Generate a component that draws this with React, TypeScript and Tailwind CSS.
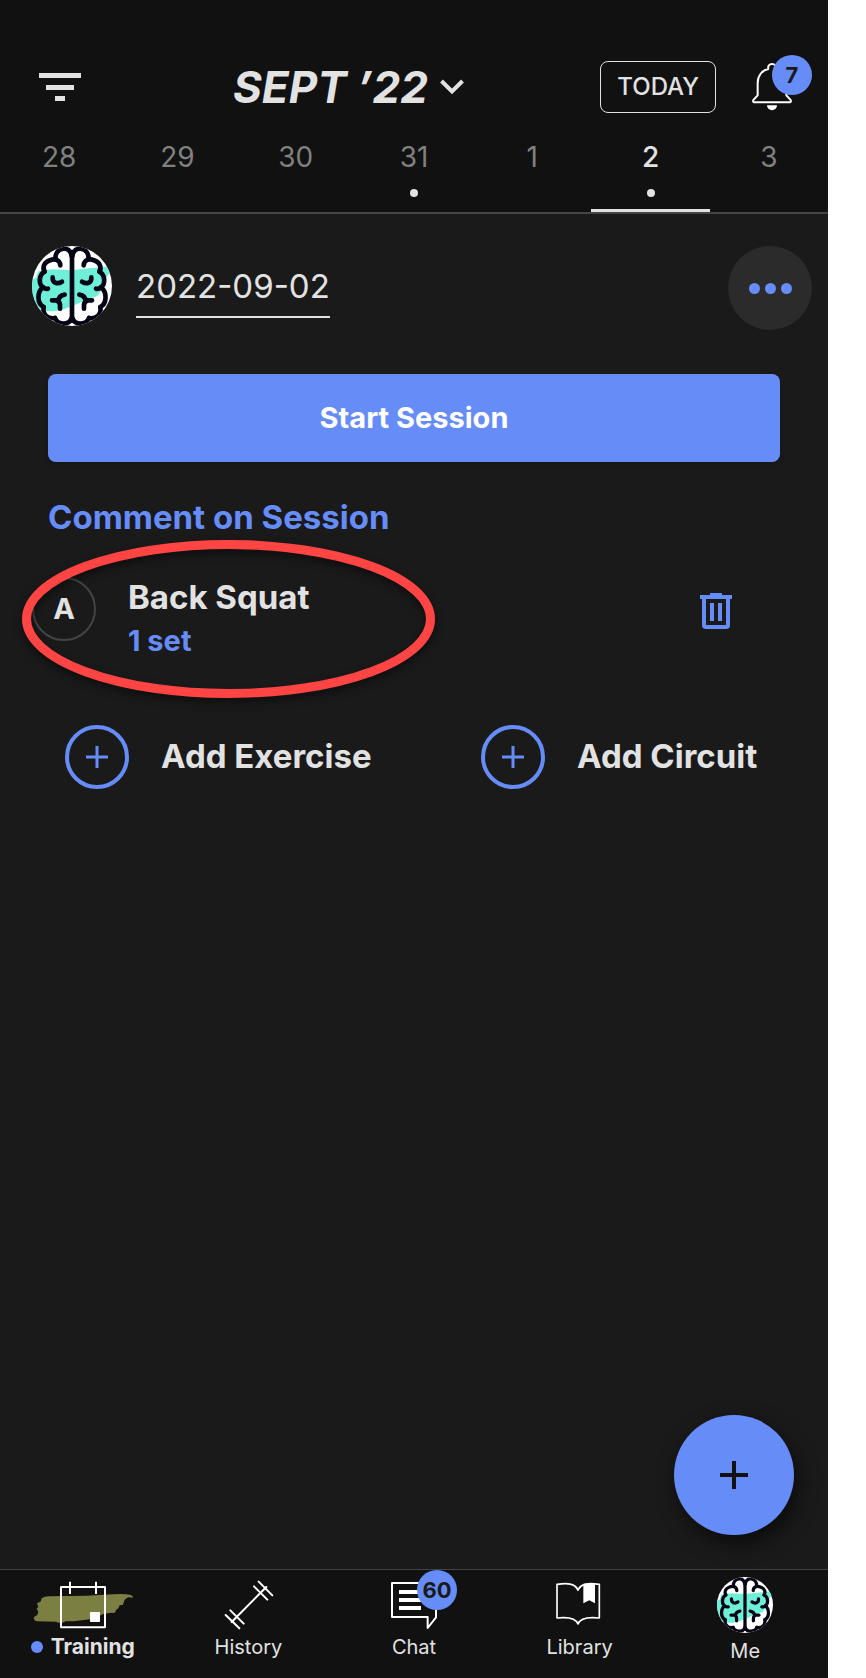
import { useState, type ReactNode } from "react";

const DAYS = [
  { day: 28 },
  { day: 29 },
  { day: 30 },
  { day: 31, dot: true },
  { day: 1 },
  { day: 2, dot: true },
  { day: 3 },
];

export default function App() {
  const [selected, setSelected] = useState(2);

  return (
    <div className="min-h-screen bg-white pr-[38px] font-['Inter',sans-serif] text-[#e2e2e2]">
      <div className="flex min-h-screen flex-col bg-[#1a1a1a]">
        <header className="border-b-2 border-[#444] bg-[#111] pt-[61px]">
          <div className="flex h-13 items-center pr-9 pl-[39px]">
            <button aria-label="Filter">
              <svg width="42" height="28" viewBox="0 0 42 28" fill="currentColor" className="block">
                <path d="M0 0h42v5H0zM7 12h28v5H7zM16 23h10v5H16z" />
              </svg>
            </button>
            <div className="ml-[152px] flex-1">
              <button className="flex items-center gap-3 text-[44px] leading-13 font-bold whitespace-nowrap italic">
                <h1>SEPT ’22</h1>
                <svg width="24" height="16" viewBox="0 0 24 16" fill="none" stroke="currentColor" strokeWidth="4">
                  <path d="M1.5 2 12 12.5 22.5 2" />
                </svg>
              </button>
            </div>
            <button className="h-13 rounded-lg border border-[#e2e2e2] px-4 text-2xl font-medium">TODAY</button>
            <button aria-label="Notifications" className="relative ml-9">
              <svg width="40" height="48" viewBox="0 0 120 144" fill="none" className="block">
                <path d="M6 118Q1 116 5 110L17 97V60C17 38 30 22 49 18C47 8 52 3 60 3S73 8 71 18C90 22 103 38 103 60V97L115 110Q119 116 114 118Z" stroke="#fff" strokeWidth="6" strokeLinejoin="round" />
                <path d="M45 127h30a15 15 0 0 1-30 0z" fill="#fff" />
              </svg>
              <Badge className="-top-2 left-5">7</Badge>
            </button>
          </div>
          <div className="mt-6 grid grid-cols-7">
            {DAYS.map((d) => (
              <button
                key={d.day}
                onClick={() => setSelected(d.day)}
                className={`flex h-[75px] flex-col items-center border-b-[3px] text-[28px] leading-10 ${d.day === selected ? "border-[#e2e2e2] font-medium" : "border-transparent text-[#808080]"}`}
              >
                {d.day}
                {d.dot && <span className="mt-3 h-2 w-2 rounded-full bg-[#e2e2e2]" />}
              </button>
            ))}
          </div>
        </header>

        <main className="relative flex-1 pt-8">
          <div className="flex items-start pr-4 pl-8">
            <Brain className="h-20 w-20" />
            <button className="mt-5 ml-6 border-b-2 border-[#e2e2e2] pb-[10px] text-[33px] leading-10">2022-09-02</button>
            <button aria-label="More" className="ml-auto flex h-21 w-21 items-center justify-center gap-[5px] rounded-full bg-[#2b2b2b]">
              <span className="h-[11px] w-[11px] rounded-full bg-[#668cf8]" />
              <span className="h-[11px] w-[11px] rounded-full bg-[#668cf8]" />
              <span className="h-[11px] w-[11px] rounded-full bg-[#668cf8]" />
            </button>
          </div>

          <div className="px-12 pt-11">
            <button className="h-22 w-full rounded-lg bg-[#668cf8] text-[29px] font-bold text-white shadow-md">Start Session</button>
            <button className="mt-8 block text-[33px] leading-[46px] font-bold text-[#668cf8]">Comment on Session</button>
          </div>

          <div className="relative mt-[35px] flex items-start pr-24 pl-8">
            <span className="mt-0.5 flex h-16 w-16 items-center justify-center rounded-full border-2 border-[#444] text-[29px] font-bold">A</span>
            <div className="ml-8 font-bold">
              <h2 className="text-[33px] leading-11">Back Squat</h2>
              <p className="text-[29px] leading-11 text-[#668cf8]">1 set</p>
            </div>
            <button aria-label="Delete exercise" className="mt-[18px] ml-auto text-[#668cf8]">
              <svg width="32" height="36" viewBox="0 0 32 36" fill="none" className="block">
                <path d="M0 2h10V0h12v2h10v4H0zM10 10h4v18h-4zM18 10h4v18h-4z" fill="currentColor" />
                <path d="M4 5v27q0 2 2 2h20q2 0 2-2V5" stroke="currentColor" strokeWidth="4" />
              </svg>
            </button>
            <svg width="460" height="190" viewBox="0 0 460 190" fill="none" className="pointer-events-none absolute -top-[50px] left-0 drop-shadow-[0_4px_4px_rgba(0,0,0,0.5)]">
              <ellipse cx="228.5" cy="94" rx="202" ry="74.5" stroke="#ff4444" strokeWidth="9" />
            </svg>
          </div>

          <div className="mt-[62px] grid grid-cols-2 gap-1">
            <AddButton label="Add Exercise" />
            <AddButton label="Add Circuit" />
          </div>

          <button aria-label="Add" className="absolute right-[34px] bottom-[34px] flex h-30 w-30 items-center justify-center rounded-full bg-[#668cf8] shadow-[4px_8px_20px_rgba(0,0,0,0.6)]">
            <svg width="28" height="28" viewBox="0 0 28 28" stroke="#111" strokeWidth="4">
              <path d="M14 0v28M0 14h28" />
            </svg>
          </button>
        </main>

        <nav className="grid grid-cols-5 border-t border-[#444] bg-[#111] pt-[7px] pb-[13px] text-xl leading-7">
          <NavItem
            label={
              <span className="flex items-center gap-2 text-[21px] font-bold">
                <span className="h-3 w-3 rounded-full bg-[#668cf8]" />
                Training
              </span>
            }
          >
            <svg width="100" height="56" viewBox="0 0 300 168" fill="none">
              <path d="M2 124Q4 117 13 114L16 104 11 96 16 89 12 80Q14 76 22 75L26 64Q36 57 51 58L161 56 241 52Q275 50 294 54L299 58V62L287 61Q274 65 272 77L269 84 260 85 256 94 249 99 246 107 230 108 211 111Q190 122 171 127L121 133 96 133 94 136 74 137 70 134 11 133Q3 131 2 124Z" fill="#7b7f42" />
              <rect x="84" y="30" width="132" height="121" rx="1" stroke="#fff" strokeWidth="6" />
              <path d="M111 14v37M189 14v37" stroke="#fff" strokeWidth="6" />
              <rect x="171" y="105" width="30" height="30" rx="2" fill="#fff" />
            </svg>
          </NavItem>
          <NavItem label="History">
            <svg width="56" height="56" viewBox="0 0 168 168" fill="none" stroke="#fff" strokeWidth="6" strokeLinecap="round">
              <path d="M35 135 139 30M116 14l41 41M102 28l40 40M31 100l40 40M17 114l41 40" />
            </svg>
          </NavItem>
          <NavItem label="Chat">
            <svg width="56" height="56" viewBox="0 0 168 168" fill="none">
              <path d="M18 18H150V121L125 153V120H18Z" stroke="#fff" strokeWidth="6" strokeLinejoin="round" />
              <path d="M39 45h66M39 69h66M39 93h66" stroke="#fff" strokeWidth="12" />
            </svg>
            <Badge className="-top-[7px] left-[31px]">60</Badge>
          </NavItem>
          <NavItem label="Library">
            <svg width="56" height="56" viewBox="0 0 168 168" fill="none">
              <path d="M15 22C45 18 70 18 78 40C86 18 111 18 142 22V123C115 120 85 122 78 141C71 122 42 120 15 123Z" stroke="#fff" strokeWidth="5" strokeLinejoin="round" />
              <path d="M94 20h35v59l-17-9-18 9z" fill="#fff" />
            </svg>
          </NavItem>
          <NavItem label={<span className="mt-1 block">Me</span>}>
            <Brain className="h-14 w-14" />
          </NavItem>
        </nav>
      </div>
    </div>
  );
}

function Badge({ className, children }: { className: string; children: ReactNode }) {
  return (
    <span className={`absolute flex h-10 w-10 items-center justify-center rounded-full bg-[#668cf8] text-[22px] font-bold text-[#1a1a1a] ${className}`}>
      {children}
    </span>
  );
}

function AddButton({ label }: { label: string }) {
  return (
    <button className="flex items-center gap-8 pl-[65px] text-[33px] font-bold whitespace-nowrap">
      <span className="flex h-16 w-16 shrink-0 items-center justify-center rounded-full border-4 border-[#668cf8]">
        <svg width="22" height="22" viewBox="0 0 22 22" stroke="#668cf8" strokeWidth="3">
          <path d="M11 0v22M0 11h22" />
        </svg>
      </span>
      {label}
    </button>
  );
}

function NavItem({ label, children }: { label: ReactNode; children: ReactNode }) {
  return (
    <a href="#" className="flex flex-col items-center">
      <span className="relative block h-14">{children}</span>
      {label}
    </a>
  );
}

function Brain({ className }: { className: string }) {
  const half = (
    <>
      <path d="M119 30C116 12 104 7 94 8C78 10 68 24 71 40" />
      <path d="M85 58C84 42 67 36 54 43C36 49 30 64 38 77" />
      <path d="M38 77C20 86 19 115 33 124Q41 130 48 128" />
      <path d="M33 124C14 138 15 173 35 183" />
      <path d="M35 183C31 206 48 220 69 216" />
      <path d="M69 216C77 238 112 238 119 216" />
      <path d="M62 94C61 111 76 116 90 107" />
      <path d="M60 163H71Q83 166 84 176V188M98 146Q80 149 79 166" />
    </>
  );
  return (
    <svg viewBox="0 0 240 240" className={`shrink-0 rounded-full bg-white ${className}`}>
      <path d="M0 100L12 96 18 76 60 70 120 73 170 67 222 62 240 66 228 88 218 100 210 130 196 150 172 158 130 176 96 190 66 196 34 196 20 188 0 150Z" fill="#6ef0d8" />
      <g fill="none" stroke="#050414" strokeWidth="14" strokeLinecap="round" strokeLinejoin="round">
        {half}
        <g transform="translate(240 0) scale(-1 1)">{half}</g>
        <path d="M120 20v204" />
      </g>
    </svg>
  );
}
